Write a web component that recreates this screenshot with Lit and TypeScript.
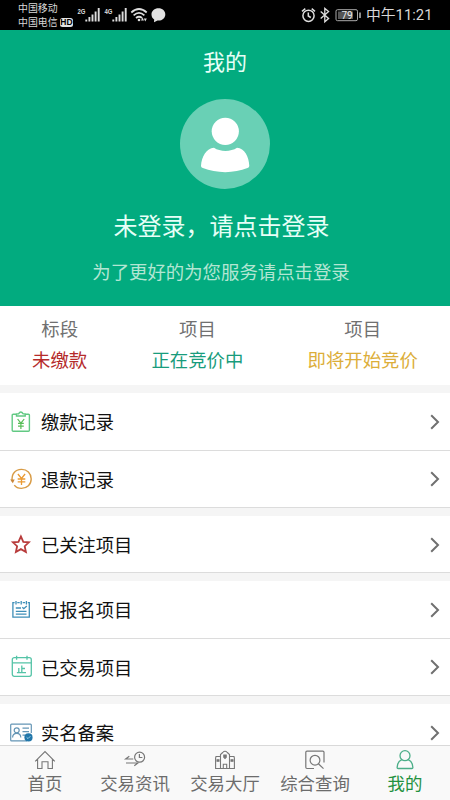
import { LitElement, html, css, TemplateResult } from "lit";
import { customElement } from "lit/decorators.js";
import { classMap } from "lit/directives/class-map.js";

const receiptIcon = html`<svg width="22" height="24" viewBox="0 0 22 24" fill="none" stroke="#62c983" stroke-width="1.4">
  <path d="M6.5 4.2H3.2Q2.2 4.2 2.2 5.200V20.200Q2.200 21.200 3.200 21.200H18.400Q19.400 21.200 19.400 20.200V5.200Q19.400 4.200 18.400 4.200H15.200M6.500 6V3.900H8.500Q10.800 .2 13.200 3.900H15.200V6Z"/>
  <path stroke="#58bd58" d="M7.600 9L10.900 13.200L14.200 9M10.900 13.200V19M8 13.400H13.800M8 16.200H13.800" stroke-width="1.200"/></svg>`;

const refundIcon = html`<svg width="22" height="24" viewBox="0 0 22 24" fill="none" stroke="#d89b45" stroke-width="1.400">
  <path d="M2.200 14.300C1.200 7 5 2.600 11.500 2.400C17 2.300 21.200 6.500 21.200 12S17 21.400 11.500 21.400C8.300 21.400 5.800 20.200 4.300 18.100"/>
  <path fill="#c98539" stroke="none" d="M.2 12.600H4.700L2.800 16.300Z"/>
  <path stroke="#eb9a32" d="M7.900 7L11.500 11.500L15.100 7M11.500 11.500V18M7.700 12H15.300M7.700 14.800H15.300" stroke-width="1.300"/></svg>`;

const starIcon = html`<svg width="22" height="24" viewBox="0 0 22 24" fill="none" stroke="#b83c3c" stroke-width="1.800">
  <path d="M10.900 3.400L13.300 8.800L18.900 9.300L14.700 13.200L15.900 19L10.900 16.100L5.900 19L7.100 13.200L2.900 9.300L8.500 8.800Z"/></svg>`;

const notepadIcon = html`<svg width="22" height="24" viewBox="0 0 22 24" fill="none" stroke="#3f8fb8" stroke-width="1.300">
  <path d="M4.600 4.700H2.900V19.200H19.300V4.700H17.800M7.300 4.700H9.700M12.700 4.700H15.100M6 3V6.400M11.200 3V6.400M16.400 3V6.400M5.800 13.300H16.500M5.800 16.200H16.500M5.800 10H11"/>
  <path d="M12.300 9.200L13.800 10.700L16.800 7.900"/></svg>`;

const calendarIcon = html`<svg width="22" height="24" viewBox="0 0 22 24" fill="none" stroke="#55c4a7" stroke-width="1.300">
  <rect x="2.300" y="2.700" width="19" height="18.600" rx="2"/>
  <path d="M2.300 7.800H21.300M6.600 .8V4.800M17 .8V4.800"/>
  <path d="M11.800 10.500V17.500M11.800 13.500H15M8.800 13V17.500M6.900 17.600H16"/></svg>`;

const idIcon = html`<svg width="24" height="24" viewBox="0 0 24 24" fill="none" stroke="#6495b5" stroke-width="1.200">
  <path d="M17 19.800H1.600Q.7 19.800 .7 18.900V4.100Q.7 3.200 1.600 3.200H20.400Q21.300 3.200 21.300 4.100V12"/>
  <circle cx="6.700" cy="9.300" r="2.500"/><path d="M2.600 16.600C2.600 11 10.800 11 10.800 16.600M12.500 7.200H19M12.500 10.700H19M12.500 14.200H15"/>
  <circle cx="18.500" cy="16.400" r="4.100" fill="#2277aa" stroke="none"/><path stroke="#9bd0e7" stroke-width="1" d="M16.600 16.300L18 17.600L20.400 15.200"/></svg>`;

const homeIcon = html`<svg width="24" height="22" viewBox="0 0 24 22" fill="none" stroke="#777" stroke-width="1.100">
  <path d="M2.200 12.300L12 2.500L21.800 12.300M4.600 10V19.500H9V12.700H15V19.500H19.400V10"/></svg>`;
const newsIcon = html`<svg width="24" height="22" viewBox="0 0 24 22" fill="none" stroke="#777" stroke-width="1.200">
  <circle cx="16.600" cy="8.200" r="5"/><path d="M16.400 5V8.500H19.400M10.300 10H2.700L6.300 7.300M3 14H14.800L11.300 16.800"/></svg>`;
const hallIcon = html`<svg width="24" height="22" viewBox="0 0 24 22" fill="none" stroke="#777" stroke-width="1.100">
  <path d="M7.500 19.500V5.500L9.700 3.500Q12 1 14.300 3.500L16.500 5.500V19.500M7.500 7.500H3L2.600 9V19.500H21.400V9L21 7.500H16.500M10.300 19.300V15.300H13.700V19.300"/>
  <path d="M10.800 6H13.200V8.200L12 9.500L10.800 8.200ZM4 10.700H6V12.200H4ZM18 10.700H20V12.200H18Z" fill="#777"/></svg>`;
const searchIcon = html`<svg width="24" height="22" viewBox="0 0 24 22" fill="none" stroke="#777" stroke-width="1.200">
  <path d="M11 19.500H4Q2.800 19.500 2.800 18.300V3.300Q2.800 2.100 4 2.100H19.800Q21 2.100 21 3.300V13.500M15.400 14.800L20.500 19.600"/>
  <circle cx="12" cy="11.200" r="4.900"/></svg>`;
const meIcon = html`<svg width="24" height="22" viewBox="0 0 24 22" fill="none" stroke="#4bae88" stroke-width="1.300">
  <circle cx="12" cy="6.700" r="5"/><path d="M8.800 10.700C6 12 4.100 15.500 4.100 18.500Q4.100 19.500 5.100 19.500H18.900Q19.900 19.500 19.900 18.500C19.900 15.500 18 12 15.200 10.700"/></svg>`;

const stats = [
  { label: "标段", value: "未缴款", tone: "red" },
  { label: "项目", value: "正在竞价中", tone: "green" },
  { label: "项目", value: "即将开始竞价", tone: "gold" },
];

const groups = [
  [{ icon: receiptIcon, text: "缴款记录" }, { icon: refundIcon, text: "退款记录" }],
  [{ icon: starIcon, text: "已关注项目" }],
  [{ icon: notepadIcon, text: "已报名项目" }, { icon: calendarIcon, text: "已交易项目" }],
  [{ icon: idIcon, text: "实名备案" }],
];

const tabs = [
  { icon: homeIcon, text: "首页" },
  { icon: newsIcon, text: "交易资讯" },
  { icon: hallIcon, text: "交易大厅" },
  { icon: searchIcon, text: "综合查询" },
  { icon: meIcon, text: "我的", active: true },
];

@customElement("status-bar")
export class StatusBar extends LitElement {
  static styles = css`
    :host { display: flex; justify-content: space-between; height: 30px; flex: none; background: #000; color: #d8d8d8; }
    .left { display: flex; padding-left: 18px; }
    .carriers { font-size: 9.900px; line-height: 14px; padding-top: 1px; width: 57px; white-space: nowrap; }
    .line { display: flex; align-items: center; height: 14px; }
    .hd { margin-left: 2.500px; background: #e4e4e4; color: #000; border-radius: 2.500px; font: bold 8.500px/9px "Liberation Sans", sans-serif; padding: 0 .3px; }
    .glyphs { display: block; }
    .right { display: flex; padding-right: 18px; }
    .time { font-family: Roboto, "Noto Sans CJK SC", sans-serif; font-size: 14.800px; line-height: 31px; width: 66px; white-space: nowrap; }
    .tag { font: bold 7px "Liberation Sans", sans-serif; fill: #ddd; }
    .battery { font: 10px Roboto, sans-serif; fill: #eee; }
  `;
  render() {
    return html`
      <div class="left">
        <div class="carriers">
          <div class="line">中国移动</div>
          <div class="line">中国电信<span class="hd">HD</span></div>
        </div>
        <svg class="glyphs" width="95" height="30" viewBox="75 0 95 30">
          <text class="tag" x="77.500" y="13.800" textLength="8" lengthAdjust="spacingAndGlyphs">2G</text>
          <text class="tag" x="104.500" y="13.800" textLength="8" lengthAdjust="spacingAndGlyphs">4G</text>
          <path stroke="#ddd" stroke-width="1.900" d="M86.300 21.500V19.500M89.400 21.500V17M92.500 21.500V14.500M95.600 21.500V11.500M98.700 21.500V8M113.300 21.500V19.500M116.400 21.500V17M119.500 21.500V14.500M122.600 21.500V11.500M125.700 21.500V8"/>
          <path fill="none" stroke="#ddd" stroke-width="1.700" d="M131.300 12.500Q139 5.500 146.700 12.500M133.600 15.300Q139 10.500 144.400 15.300M136 18Q139 15.500 142 18"/>
          <circle cx="139" cy="20" r="1.300" fill="#ddd"/>
          <path fill="#ddd" d="M142.500 17.500L144 20.500H141ZM145.300 21.500L143.800 18.500H146.800Z"/>
          <path fill="#e2e2e2" d="M158.500 8.300C154.500 8.300 151.500 11 151.500 14.400C151.500 16.600 152.500 18.300 154.200 19.400L154 22.300L157.500 20.500C162 21 165.300 18 165.300 14.400C165.300 11 162.500 8.300 158.500 8.300Z"/>
        </svg>
      </div>
      <div class="right">
        <svg class="glyphs" width="67" height="30" viewBox="299 0 67 30" fill="none" stroke="#ddd" stroke-width="1.500">
          <circle cx="308.500" cy="15.800" r="5.600"/><path d="M308.300 12.500V16L310.800 17.500M302 11.300L305.300 8.600M315 11.300L311.700 8.600"/>
          <path stroke-width="1.300" d="M320.700 11.500L328.600 18.500L324.800 21.800V8.400L328.600 11.500L320.700 18.500"/>
          <rect x="336" y="9.700" width="21.500" height="11" rx="1.500" stroke="#aaa" stroke-width="1"/>
          <rect x="338" y="11.500" width="15" height="7.500" fill="#555" stroke="none"/>
          <path stroke="#bbb" d="M360 12.500V18"/>
          <text class="battery" x="341.500" y="18.800" stroke="none">79</text>
        </svg>
        <div class="time">中午11:21</div>
      </div>`;
  }
}

@customElement("menu-row")
export class MenuRow extends LitElement {
  static properties = { icon: { attribute: false }, text: {} };
  declare icon: TemplateResult;
  declare text: string;
  static styles = css`
    :host { display: flex; align-items: center; box-sizing: border-box; height: 57.600px; padding: 1px 9px 0 10px; background: #fff; font-size: 18.300px; color: #111; border-bottom: 1px solid #dcdcdc; }
    .icon { display: flex; width: 31px; flex: none; }
    .text { flex: 1; line-height: 22px; margin-bottom: 1.500px; }
  `;
  render() {
    return html`<span class="icon">${this.icon}</span><span class="text">${this.text}</span>
      <svg width="12" height="18" viewBox="0 0 12 18" fill="none" stroke="#707070" stroke-width="2"><path d="M2.200 2.300L9 9L2.200 15.700"/></svg>`;
  }
}

@customElement("app-root")
export class AppRoot extends LitElement {
  static styles = css`
    :host { display: flex; flex-direction: column; width: 450px; height: 800px; overflow: hidden; background: #fff; font-family: "Noto Sans CJK SC", sans-serif; }
    .hero { flex: none; height: 276px; background: #02ab7f; color: #e6fff7; display: flex; flex-direction: column; align-items: center; box-sizing: border-box; padding-top: 14px; }
    .title { font-size: 22px; line-height: 32px; }
    .avatar { display: block; margin-top: 23px; }
    .login { font-size: 24px; line-height: 36px; margin-top: 18px; margin-right: 7px; }
    .hint { font-size: 18.400px; line-height: 28px; margin-top: 14px; margin-right: 8px; color: #b3e6d3; }
    .stats { flex: none; height: 79px; box-sizing: border-box; padding-top: 7px; display: flex; justify-content: space-around; text-align: center; font-size: 18.400px; }
    .label { line-height: 31px; color: #707070; }
    .value { line-height: 31px; }
    .red { color: #b52b2b; }
    .green { color: #189c7c; }
    .gold { color: #dcae3a; }
    .list { flex: 1; min-height: 0; overflow: hidden; background: #f5f5f5; }
    .group { margin-top: 7.600px; }
    .group:first-child { margin-top: 8px; }
    .tabs { flex: none; height: 55px; box-sizing: border-box; border-top: 1px solid #d9d9d9; background: #f9f9f9; display: grid; grid-template-columns: repeat(5, 1fr); }
    .tab { display: flex; flex-direction: column; align-items: center; padding-top: 3px; font-size: 17.400px; color: #6c6c6c; }
    .tab-icon { display: flex; height: 22px; }
    .tab-text { line-height: 24px; }
    .active { color: #23913f; }
  `;
  render() {
    return html`
      <status-bar></status-bar>
      <header class="hero">
        <div class="title">我的</div>
        <svg class="avatar" width="90" height="90" viewBox="0 0 90 90">
          <circle cx="45" cy="45" r="45" fill="#69d0b5"/>
          <circle cx="45.300" cy="32.300" r="13.600" fill="#fff"/>
          <path fill="#fff" d="M34 48.800C40 53 51 53 57 48.800C64.500 49.300 69 57.500 69.300 67Q69.300 68.500 67.500 69.100C54 74.500 36.500 74.500 22.800 69.100Q21 68.500 21 67C21.500 57.500 26.500 49.300 34 48.800Z"/>
        </svg>
        <div class="login">未登录，请点击登录</div>
        <div class="hint">为了更好的为您服务请点击登录</div>
      </header>
      <section class="stats">
        ${stats.map((s) => html`<div><div class="label">${s.label}</div><div class="value ${s.tone}">${s.value}</div></div>`)}
      </section>
      <main class="list">
        ${groups.map((g) => html`<div class="group">${g.map((r) => html`<menu-row .icon=${r.icon} .text=${r.text}></menu-row>`)}</div>`)}
      </main>
      <nav class="tabs">
        ${tabs.map((t) => html`<div class=${classMap({ tab: true, active: !!t.active })}><span class="tab-icon">${t.icon}</span><span class="tab-text">${t.text}</span></div>`)}
      </nav>`;
  }
}
